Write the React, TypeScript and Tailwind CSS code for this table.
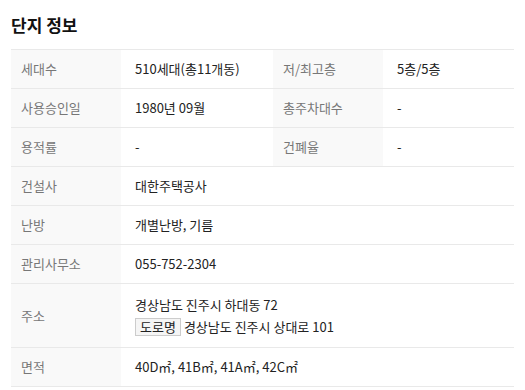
const font = { fontFamily: '"Noto Sans CJK KR", "Noto Sans", sans-serif' };

const th = "w-[110px] bg-[#f9f9f9] pl-[10px] text-left font-normal text-[#777]";
const td = "pl-[14px] text-[#222]";

const App = () => {
  return (
    <div className="bg-white w-[525px] h-[390px] px-[11px] pt-[12px]" style={font}>
      <h2 className="text-[17px] font-bold text-[#111] leading-[26px] mb-[11px]">단지 정보</h2>
      <table className="w-[503px] border-collapse text-[13px] table-fixed">
        <colgroup>
          <col className="w-[110px]" />
          <col className="w-[152px]" />
          <col className="w-[110px]" />
          <col className="w-[131px]" />
        </colgroup>
        <tbody>
          <tr className="h-[39px] border-t border-b border-[#e9e9e9]">
            <th className={th}>세대수</th>
            <td className={td}>510세대(총11개동)</td>
            <th className={th}>저/최고층</th>
            <td className={td}>5층/5층</td>
          </tr>
          <tr className="h-[39px] border-b border-[#e9e9e9]">
            <th className={th}>사용승인일</th>
            <td className={td}>1980년 09월</td>
            <th className={th}>총주차대수</th>
            <td className={td}>-</td>
          </tr>
          <tr className="h-[39px] border-b border-[#e9e9e9]">
            <th className={th}>용적률</th>
            <td className={td}>-</td>
            <th className={th}>건폐율</th>
            <td className={td}>-</td>
          </tr>
          <tr className="h-[39px] border-b border-[#e9e9e9]">
            <th className={th}>건설사</th>
            <td className={td} colSpan={3}>대한주택공사</td>
          </tr>
          <tr className="h-[39px] border-b border-[#e9e9e9]">
            <th className={th}>난방</th>
            <td className={td} colSpan={3}>개별난방, 기름</td>
          </tr>
          <tr className="h-[39px] border-b border-[#e9e9e9]">
            <th className={th}>관리사무소</th>
            <td className={td} colSpan={3}>055-752-2304</td>
          </tr>
          <tr className="h-[64px] border-b border-[#e9e9e9]">
            <th className={th}>주소</th>
            <td className={td} colSpan={3}>
              <div className="leading-[22px]">경상남도 진주시 하대동 72</div>
              <div className="leading-[22px] flex items-center">
                <span className="inline-block border border-[#ccc] bg-[#f5f5f5] px-[4px] leading-[16px] mr-[3px] text-[#222]">도로명</span>
                경상남도 진주시 상대로 101
              </div>
            </td>
          </tr>
          <tr className="h-[39px] border-b border-[#e9e9e9]">
            <th className={th}>면적</th>
            <td className={td} colSpan={3}>40D㎡, 41B㎡, 41A㎡, 42C㎡</td>
          </tr>
        </tbody>
      </table>
    </div>
  );
};

export default App;
